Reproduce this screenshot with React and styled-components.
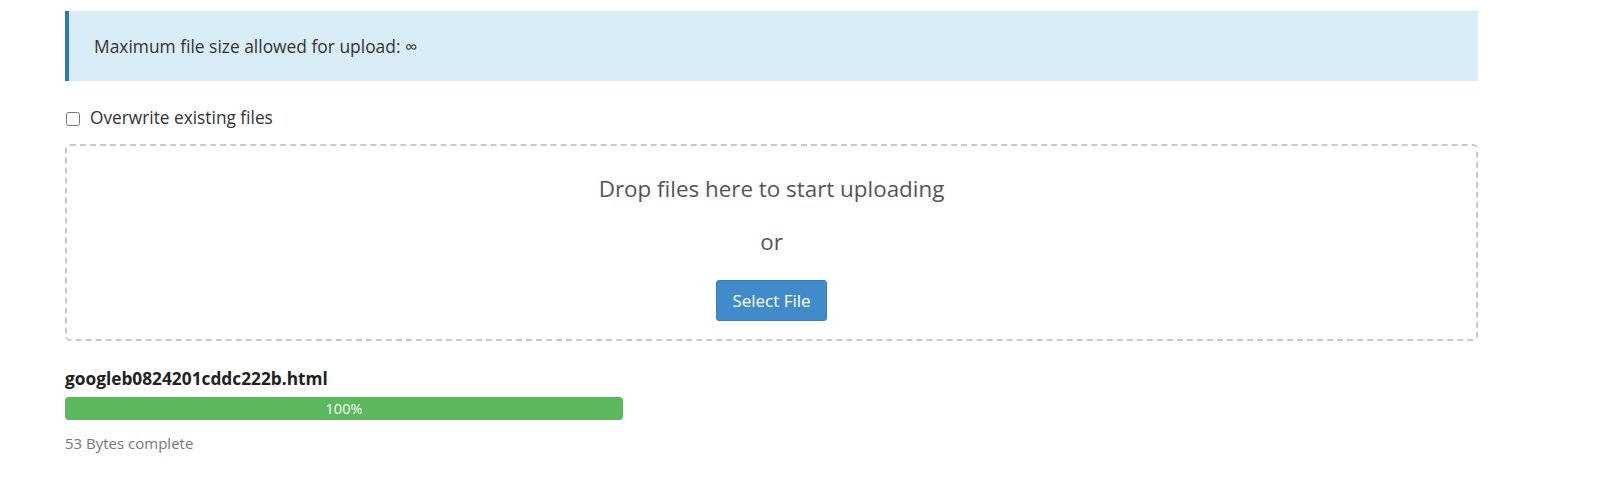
import React from 'react';
import styled, { createGlobalStyle } from 'styled-components';

const GlobalStyle = createGlobalStyle`
	body {
		margin: 0;
		background: #fff;
		font-family: 'Open Sans', 'Noto Sans', sans-serif;
		color: #333;
	}
`;

const Page = styled.div`
	width: 1413px;
	padding: 11px 0 0 65px;
`;

const InfoAlert = styled.div`
	background: #d9edf7;
	border-left: 4px solid #2a7ab5;
	padding: 24px 25px;
	font-size: 17.4px;
	line-height: 22px;
	color: #333;
`;

const CheckRow = styled.label`
	display: flex;
	align-items: center;
	gap: 10px;
	margin-top: 26px;
	font-size: 17.3px;
	line-height: 22px;
	color: #333;

	input {
		width: 14px;
		height: 14px;
		margin: 2px 0 0 1px;
	}
`;

const DropZone = styled.div`
	margin-top: 15px;
	border: 2px dashed #c9c9c9;
	border-radius: 5px;
	padding: 28px 0 18px;
	display: flex;
	flex-direction: column;
	align-items: center;
	gap: 23px;
`;

const DropText = styled.div`
	font-size: 22.4px;
	line-height: 30px;
	color: #555;
`;

const SelectButton = styled.button`
	width: 111px;
	height: 41px;
	background: #428bca;
	border: 1px solid #357ebd;
	border-radius: 3px;
	color: #fff;
	font-family: inherit;
	font-size: 17px;
	padding: 0;
`;

const FileName = styled.div`
	margin-top: 27px;
	font-size: 17.3px;
	font-weight: 700;
	line-height: 22px;
	color: #222;
`;

const Progress = styled.div`
	margin-top: 7px;
	width: 558px;
	height: 23px;
	border-radius: 4px;
	background: #f5f5f5;
	overflow: hidden;
`;

const ProgressFill = styled.div`
	height: 100%;
	background: #5cb85c;
	color: #fff;
	font-size: 14.5px;
	line-height: 23px;
	text-align: center;
`;

const Status = styled.div`
	margin-top: 13px;
	font-size: 15px;
	line-height: 20px;
	color: #777;
`;

export default function App() {
	const percent = 100;
	return (
		<Page>
			<GlobalStyle />
			<InfoAlert>Maximum file size allowed for upload: ∞</InfoAlert>
			<CheckRow>
				<input type="checkbox" />
				Overwrite existing files
			</CheckRow>
			<DropZone>
				<DropText>Drop files here to start uploading</DropText>
				<DropText>or</DropText>
				<SelectButton>Select File</SelectButton>
			</DropZone>
			<FileName>googleb0824201cddc222b.html</FileName>
			<Progress>
				<ProgressFill style={{ width: `${percent}%` }}>{percent}%</ProgressFill>
			</Progress>
			<Status>53 Bytes complete</Status>
		</Page>
	);
}
